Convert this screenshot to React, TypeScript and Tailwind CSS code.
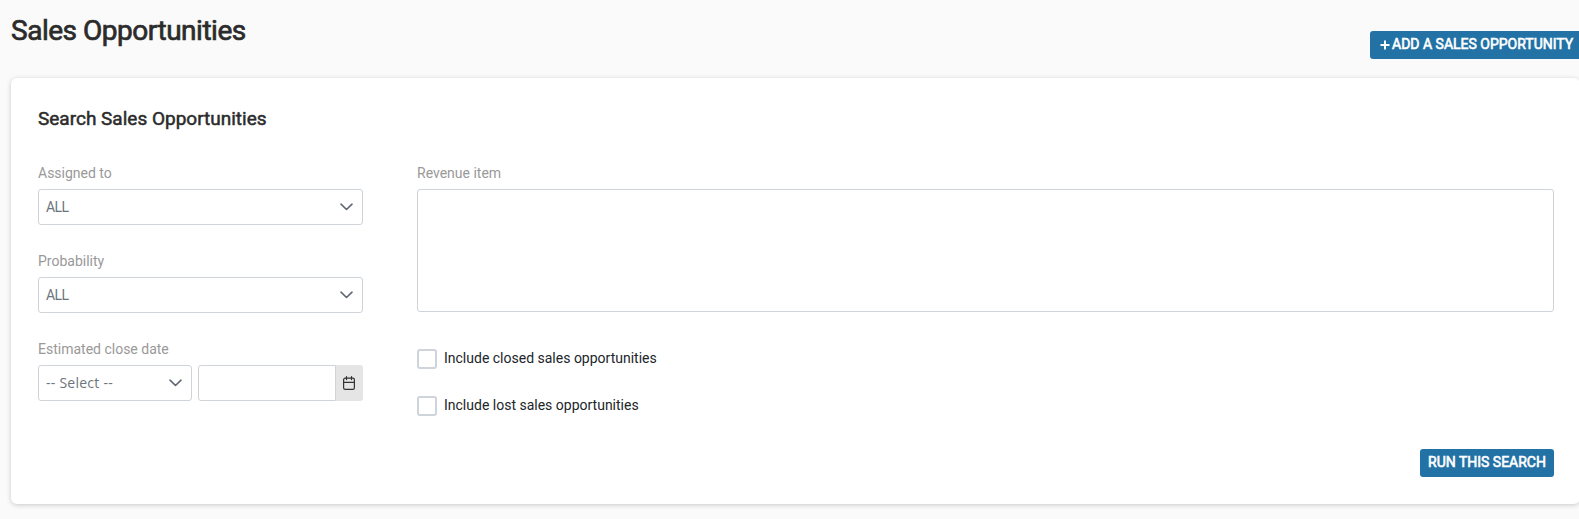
import { useState } from "react";

function Chevron() {
  return (
    <svg className="mb-px h-2 w-[13px] shrink-0" viewBox="0 0 13 8" fill="none" stroke="#5f6873" strokeWidth="1.6" strokeLinecap="round" strokeLinejoin="round">
      <path d="M1 1.2l5.5 5.3L12 1.2" />
    </svg>
  );
}

function CalendarIcon() {
  return (
    <svg className="mr-px h-[14px] w-3" viewBox="0 0 12 14" fill="none" stroke="#333333" strokeWidth="1.2" strokeLinecap="round">
      <rect x="0.6" y="2.1" width="10.8" height="11.3" rx="1.6" />
      <path d="M0.6 6.4h10.8M3.5 0.6v3M8.5 0.6v3" />
    </svg>
  );
}

function Label({ children }: { children: string }) {
  return <label className="mb-1.5 block h-5 text-sm leading-5 text-[#999999]">{children}</label>;
}

function Select({ value, className }: { value: string; className: string }) {
  return (
    <button className={`flex h-9 items-center justify-between rounded-[3px] border border-[#ced4da] bg-white pr-[9px] pl-[7px] text-sm text-[#6c757d] ${className}`}>
      {value}
      <Chevron />
    </button>
  );
}

function Checkbox({ label }: { label: string }) {
  const [checked, setChecked] = useState(false);

  return (
    <label className="flex h-5 items-center gap-[7px] text-sm text-[#212529]">
      <input
        type="checkbox"
        checked={checked}
        onChange={() => setChecked(!checked)}
        className="size-5 appearance-none rounded-[3px] border-2 border-[#ced4da] bg-white checked:bg-[#2372a5]"
      />
      <span className="-mt-0.5 leading-5">{label}</span>
    </label>
  );
}

export default function App() {
  return (
    <main className="h-[519px] overflow-hidden bg-[#fafafa] font-[Roboto,sans-serif]">
      {/* Page header */}
      <header className="flex h-[78px] w-[1580px] items-start justify-between pl-[11px]">
        <h1 className="mt-[13px] text-[28px] leading-9 tracking-[-0.48px] text-[#2b2b2b] [-webkit-text-stroke:0.7px_#2b2b2b]">Sales Opportunities</h1>
        <button className="mt-[31px] flex h-7 w-[210px] items-center rounded-l-[3px] bg-[#2372a5] pb-0.5 pl-2.5 text-sm whitespace-nowrap text-white [-webkit-text-stroke:0.6px_white]">
          <svg className="mt-px mr-[2px] size-[10px]" viewBox="0 0 10 10" stroke="white" strokeWidth="2">
            <path d="M5 0.5v9M0.5 5h9" />
          </svg>
          ADD A SALES OPPORTUNITY
        </button>
      </header>

      {/* Search panel */}
      <section className="ml-[11px] flex h-[426px] w-[1569px] flex-col rounded-md bg-white pr-[26px] pl-[27px] shadow-[0_1px_5px_rgba(0,0,0,0.2)]">
        <h2 className="mt-[29px] mb-8 text-[19px] leading-6 text-[#2b2b2b] [-webkit-text-stroke:0.5px_#2b2b2b]">Search Sales Opportunities</h2>

        <div className="flex gap-[54px]">
          <div className="flex w-[325px] flex-col gap-[26px]">
            <div>
              <Label>Assigned to</Label>
              <Select value="ALL" className="w-full tracking-[-0.6px]" />
            </div>
            <div>
              <Label>Probability</Label>
              <Select value="ALL" className="w-full tracking-[-0.6px]" />
            </div>
            <div>
              <Label>Estimated close date</Label>
              <div className="flex">
                <Select value="-- Select --" className="mr-1.5 w-[154px] font-['Open_Sans',sans-serif] tracking-[0.25px]" />
                <input className="h-9 w-[138px] rounded-l-[3px] border border-[#ced4da] bg-white px-2 text-sm outline-none" />
                <button className="flex h-9 w-[27px] items-center justify-center rounded-r-[3px] bg-[#e5e5e5]">
                  <CalendarIcon />
                </button>
              </div>
            </div>
          </div>

          <div className="flex-1">
            <Label>Revenue item</Label>
            <textarea className="block h-[123px] w-full resize-none rounded-[3px] border border-[#ced4da] bg-white p-2 text-sm outline-none" />
            <div className="mt-[37px] flex flex-col gap-[27px]">
              <Checkbox label="Include closed sales opportunities" />
              <Checkbox label="Include lost sales opportunities" />
            </div>
          </div>
        </div>

        <button className="mt-[33px] h-7 w-[134px] self-end rounded-[3px] bg-[#2372a5] pb-0.5 text-sm whitespace-nowrap text-white [-webkit-text-stroke:0.6px_white]">
          RUN THIS SEARCH
        </button>
      </section>
    </main>
  );
}
